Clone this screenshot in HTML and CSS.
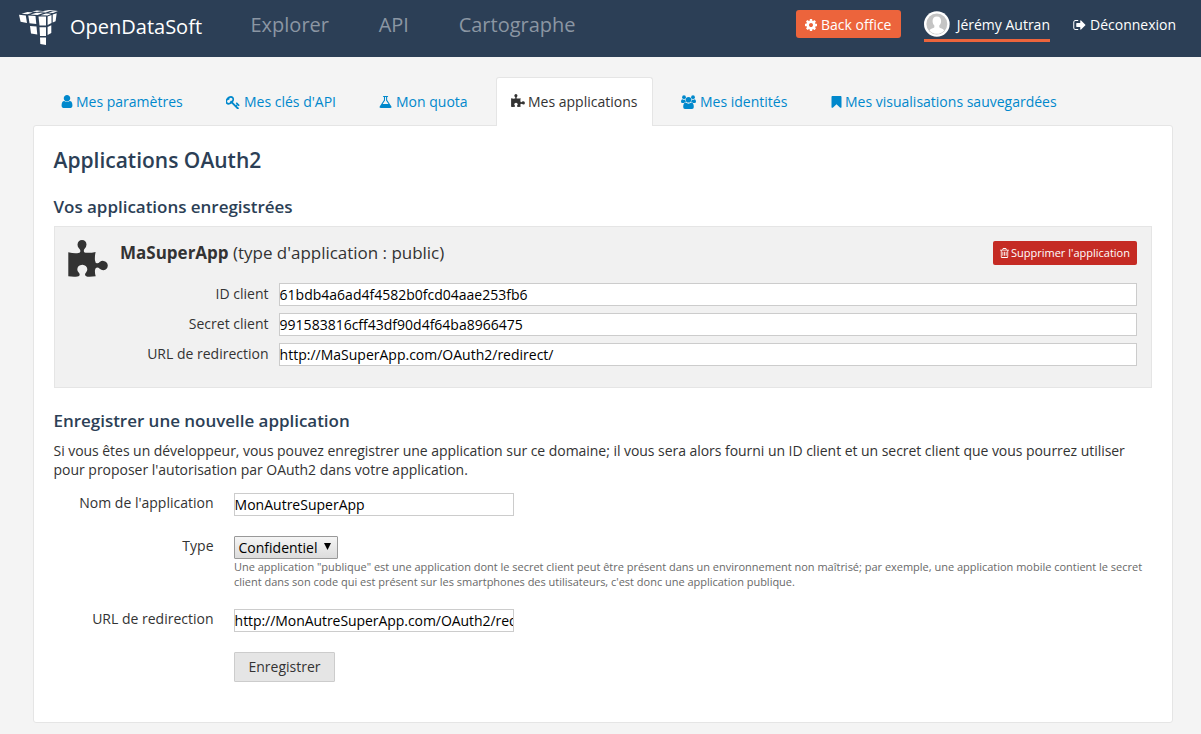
FILE: index.html
```html
<!DOCTYPE html>
<html lang="fr">
<head>
<meta charset="utf-8">
<title>OpenDataSoft - Mes applications</title>
<link rel="stylesheet" href="styles.css">
</head>
<body>
<header class="topbar">
  <a class="brand">
    <svg class="brand-logo" viewBox="0 0 40 36" fill="#fff">
      <path d="M0 4.800L6.800 5.600L8 13L1.600 11.800ZM9.300 5.500L16.500 6L17.300 14L10.500 13.200ZM19.500 6.500H27V15.500H20.500ZM11 16L17.500 16.600L18.300 24.500L12 23.600ZM20.500 17.200H27V26H21ZM21 27.500H27V35L21.300 34ZM28.600 6.500L32.500 5V13L28.600 15ZM33.700 4.500L37.700 3.200L36.600 11.300L33.700 12.600ZM28.600 17L32.300 15.200V23L28.600 25ZM2.500 3.700L8.500 2L14 2.400L8.500 4.200ZM11.500 4.400L17.500 2.700L24 3.100L18.500 5ZM21.500 5.300L27 3.400L32.500 3.700L28.500 5.600ZM13 1.600L18 .5L23.500 .9L18 2ZM20.500 2.200L26 .9L31 1.200L26.500 2.600ZM29.500 2.700L34 1.200L39 .9L34 3ZM24.500 .6L29.500 0L39 .4L30.500 .9Z"/>
    </svg>
    <span>OpenDataSoft</span>
  </a>
  <nav class="main-nav"><a>Explorer</a><a>API</a><a>Cartographe</a></nav>
  <div class="account">
    <a class="backoffice"><svg class="icon" viewBox="128 128 1536 1536"><path d="M1152 896q0-106-75-181t-181-75-181 75-75 181 75 181 181 75 181-75 75-181zm512-109v222q0 12-8 23t-20 13l-185 28q-19 54-39 91 35 50 107 138 10 12 10 25t-9 23q-27 37-99 108t-94 71q-12 0-26-9l-138-108q-44 23-91 38-16 136-29 186-7 28-36 28h-222q-14 0-24.500-8.500t-11.500-21.500l-28-184q-49-16-90-37l-141 107q-10 9-25 9-14 0-25-11-126-114-165-168-7-10-7-23 0-12 8-23 15-21 51-66.500t54-70.500q-27-50-41-99l-183-27q-13-2-21-12.500t-8-23.500v-222q0-12 8-23t19-13l186-28q14-46 39-92-40-57-107-138-10-12-10-24 0-10 9-23 26-36 98.500-107.500t94.500-71.500q13 0 26 10l138 107q44-23 91-38 16-136 29-186 7-28 36-28h222q14 0 24.500 8.500t11.500 21.500l28 184q49 16 90 37l142-107q9-9 24-9 13 0 25 10 129 119 165 170 7 8 7 22 0 12-8 23-15 21-51 66.500t-54 70.500q26 50 41 98l183 28q13 2 21 12.500t8 23.500z"/></svg><span>Back office</span></a>
    <a class="profile">
      <svg class="avatar" viewBox="0 0 26 26"><circle cx="13" cy="13" r="13" fill="#fff"/><circle cx="13" cy="13" r="10.600" fill="#c4c4c4"/><path fill="#fff" d="M13 5.500c3 0 4.300 2 4.300 4.500 0 2-.8 3.600-1.800 4.600v1.600c.8 1 4 1.200 5 3.400A10 10 0 0 1 13 23a10 10 0 0 1-7.500-3.400c1-2.200 4.200-2.400 5-3.400v-1.600c-1-1-1.800-2.600-1.800-4.600 0-2.500 1.300-4.500 4.300-4.500z"/></svg>
      <span>Jérémy Autran</span>
    </a>
    <a class="logout"><svg class="icon" viewBox="64 128 1600 1536"><path d="M704 1440q0 4 1 20t.5 26.500-3 23.500-10 19.500-20.500 6.500h-320q-119 0-203.500-84.500t-84.500-203.500v-704q0-119 84.500-203.500t203.500-84.500h320q13 0 22.500 9.500t9.500 22.500q0 4 1 20t.5 26.500-3 23.500-10 19.500-20.500 6.500h-320q-66 0-113 47t-47 113v704q0 66 47 113t113 47h312l11.500 1 11.500 3 8 5.500 7 9 2 13.500zm928-544q0 26-19 45l-544 544q-19 19-45 19t-45-19-19-45v-288h-448q-26 0-45-19t-19-45v-384q0-26 19-45t45-19h448v-288q0-26 19-45t45-19 45 19l544 544q19 19 19 45z"/></svg><span>Déconnexion</span></a>
  </div>
</header>

<nav class="tabs">
  <a class="tab tab-settings"><svg class="icon" viewBox="256 128 1280 1536"><path d="M1536 1399q0 109-62.500 187t-150.500 78h-854q-88 0-150.500-78t-62.500-187q0-85 8.500-160.500t31.500-152 58.500-131 94-89 134.500-34.500q131 128 313 128t313-128q76 0 134.500 34.500t94 89 58.500 131 31.500 152 8.500 160.500zm-256-887q0 159-112.500 271.500t-271.500 112.500-271.500-112.500-112.500-271.500 112.500-271.500 271.500-112.500 271.500 112.500 112.500 271.500z"/></svg><span>Mes paramètres</span></a>
  <a class="tab tab-keys"><svg class="icon" viewBox="64 128 1664 1536"><path d="M832 512q0-80-56-136t-136-56-136 56-56 136q0 42 19 83-41-19-83-19-80 0-136 56t-56 136 56 136 136 56 136-56 56-136q0-42-19-83 41 19 83 19 80 0 136-56t56-136zm851 704q0 17-49 66t-66 49q-9 0-28.500-16t-36.500-33-38.500-40-24.500-26l-96 96 220 220q28 28 28 68 0 42-39 81t-81 39q-40 0-68-28l-671-671q-176 131-365 131-163 0-265.500-102.500t-102.500-265.500q0-160 95-313t248-248 313-95q163 0 265.500 102.500t102.500 265.500q0 189-131 365l355 355 96-96q-3-3-26-24.500t-40-38.500-33-36.500-16-28.500q0-17 49-66t66-49q13 0 23 10 6 6 46 44.500t82 79.500 86.500 86 73 78 28.500 41z"/></svg><span>Mes clés d'API</span></a>
  <a class="tab tab-quota"><svg class="icon" viewBox="100 128 1580 1536" preserveAspectRatio="none"><path d="M1591 1448q56 89 21.500 152.500t-140.500 63.500h-1152q-106 0-140.500-63.500t21.500-152.500l503-793v-399h-64q-26 0-45-19t-19-45 19-45 45-19h512q26 0 45 19t19 45-19 45-45 19h-64v399zm-779-725l-272 429h712l-272-429-20-31v-436h-128v436z"/></svg><span>Mon quota</span></a>
  <a class="tab tab-apps active"><svg class="icon" viewBox="0 0 40 37"><use href="#puzzle"/></svg><span>Mes applications</span></a>
  <a class="tab tab-ids"><svg class="icon" viewBox="0 0 15 14"><circle cx="3" cy="2.200" r="1.900"/><circle cx="12" cy="2.200" r="1.900"/><circle cx="7.500" cy="4.800" r="2.800"/><path d="M1.300 4.200Q2.900 5.200 4.200 4.600Q4.100 6 5 7.100Q3.700 7.100 2.900 8H1.500Q0 8 0 6.700Q0 4.500 1.300 4.200ZM13.700 4.200Q12.100 5.200 10.800 4.600Q10.900 6 10 7.100Q11.300 7.100 12.100 8H13.500Q15 8 15 6.700Q15 4.500 13.700 4.200ZM4.700 7.600Q7.500 9.700 10.300 7.600Q12.800 7.700 12.800 12Q12.800 14 11 14H4Q2.200 14 2.200 12Q2.200 7.700 4.700 7.600Z"/></svg><span>Mes identités</span></a>
  <a class="tab tab-saved"><svg class="icon" viewBox="256 128 1280 1536"><path d="M1420 128q23 0 44 9 33 13 52.500 41t19.500 62v1289q0 34-19.500 62t-52.500 41q-19 8-44 8-48 0-83-32l-441-424-441 424q-36 33-83 33-23 0-44-9-33-13-52.500-41t-19.500-62v-1289q0-34 19.500-62t52.500-41q21-9 44-9h1048z"/></svg><span>Mes visualisations sauvegardées</span></a>
</nav>

<main class="panel">
  <h1>Applications OAuth2</h1>
  <h2>Vos applications enregistrées</h2>
  <section class="app">
    <svg class="app-icon" viewBox="0 0 40 37"><path id="puzzle" d="M.3 12.300Q6 13.600 10.500 13Q12.800 12.600 12.300 10.600Q12 9.300 10.700 8Q9.500 6.500 9.500 4.500Q10 .1 14 0Q18.200 .2 18.500 4.500Q18.400 6.700 17 8.200Q15.800 9.500 15.800 10.700Q15.600 12.500 17.500 12.700Q22 13.200 27.600 12Q26.600 16.500 27 20.500Q27.300 23.300 29.200 23.300Q30.500 23.200 32 21.700Q33.500 20.700 35.500 20.900Q39.500 21.400 39.800 25.500Q39.500 29.800 35.500 30.200Q33.300 30.300 31.700 28.800Q30.500 27.600 29 27.500Q27.300 27.600 27 30Q26.700 33 27.700 36.300Q23.500 36.900 19.500 36.700Q17 36.300 17 34.600Q17 33.500 18.200 32.200Q19.400 30.800 19.300 29Q18.700 25 14.400 24.700Q9.500 25 9.300 29.200Q9.300 31 10.500 32.300Q11.700 33.500 11.700 34.700Q11.600 36.300 9.500 36.600Q5 37.100 .3 36.300Z"/></svg>
    <div class="app-head">
      <h3><strong>MaSuperApp</strong> <span>(type d'application : public)</span></h3>
      <button class="delete"><svg class="icon" viewBox="192 128 1408 1536"><path d="M704 736v576q0 14-9 23t-23 9h-64q-14 0-23-9t-9-23v-576q0-14 9-23t23-9h64q14 0 23 9t9 23zm256 0v576q0 14-9 23t-23 9h-64q-14 0-23-9t-9-23v-576q0-14 9-23t23-9h64q14 0 23 9t9 23zm256 0v576q0 14-9 23t-23 9h-64q-14 0-23-9t-9-23v-576q0-14 9-23t23-9h64q14 0 23 9t9 23zm128 724v-948h-896v948q0 22 7 40.500t14.500 27 10.500 8.500h832q3 0 10.500-8.500t14.500-27 7-40.500zm-672-1076h448l-48-117q-7-9-17-11h-317q-10 2-17 11zm928 32v64q0 14-9 23t-23 9h-96v948q0 83-47 143.500t-113 60.500h-832q-66 0-113-58.500t-47-141.500v-952h-96q-14 0-23-9t-9-23v-64q0-14 9-23t23-9h309l70-167q15-37 54-63t79-26h320q40 0 79 26t54 63l70 167h309q14 0 23 9t9 23z"/></svg><span>Supprimer l'application</span></button>
    </div>
    <div class="app-fields">
      <label for="cid">ID client</label><input id="cid" type="text" value="61bdb4a6ad4f4582b0fcd04aae253fb6">
      <label for="sec">Secret client</label><input id="sec" type="text" value="991583816cff43df90d4f64ba8966475">
      <label for="url">URL de redirection</label><input id="url" type="text" value="http://MaSuperApp.com/OAuth2/redirect/">
    </div>
  </section>

  <h2 class="new-title">Enregistrer une nouvelle application</h2>
  <p class="intro">Si vous êtes un développeur, vous pouvez enregistrer une application sur ce domaine; il vous sera alors fourni un ID client et un secret client que vous pourrez utiliser<br><span>pour proposer l'autorisation par OAuth2 dans votre application.</span></p>
  <form class="new-form">
    <label for="name">Nom de l'application</label>
    <div><input id="name" type="text" value="MonAutreSuperApp"></div>
    <label for="type">Type</label>
    <div>
      <div class="select" id="type"><span>Confidentiel</span><svg viewBox="0 0 7 7"><path d="M0 0H7L3.500 7Z"/></svg></div>
      <p class="help">Une application "publique" est une application dont le secret client peut être présent dans un environnement non maîtrisé; par exemple, une application mobile contient le secret<br>client dans son code qui est présent sur les smartphones des utilisateurs, c'est donc une application publique.</p>
    </div>
    <label for="redir">URL de redirection</label>
    <div><input id="redir" type="text" value="http://MonAutreSuperApp.com/OAuth2/redirect/"></div>
    <span></span>
    <div><button type="button" class="save">Enregistrer</button></div>
  </form>
</main>
</body>
</html>
```
FILE: styles.css
```css
* { box-sizing: border-box; }
body {
  margin: 0;
  height: 734px;
  overflow: hidden;
  background: #f4f4f4;
  color: #333;
  font: 14px/19px "Open Sans", "Noto Sans", sans-serif;
}
h1, h2, h3, p { margin: 0; }
span, a, label, p, h1, h2 { white-space: nowrap; }
input, button { font-family: inherit; }
.icon { fill: currentColor; flex: none; width: 12px; height: 12px; }

.topbar {
  display: flex;
  height: 57px;
  background: #2c3f56;
  color: #fff;
}
.brand {
  display: flex;
  width: 250.5px;
  padding: 10px 0 0 19px;
  font-size: 20px;
  line-height: 34px;
}
.brand-logo { width: 40px; height: 36px; margin-right: 11px; }
.main-nav {
  display: flex;
  gap: 49.7px;
  padding-top: 10px;
  color: #8b96a3;
  font-size: 20px;
  line-height: 30px;
}
.account { display: flex; margin-left: auto; padding: 10px 25px 0 0; }
.backoffice {
  display: flex;
  align-items: center;
  gap: 4px;
  width: 105px;
  height: 28px;
  padding-left: 9px;
  border-radius: 3px;
  background: #ec643c;
}
.backoffice .icon { margin-top: 2px; }
.profile {
  display: flex;
  gap: 7px;
  width: 126px;
  height: 31px;
  margin: 1px 0 0 23px;
  border-bottom: 3px solid #ec643c;
  line-height: 27px;
}
.avatar { width: 26px; height: 26px; }
.logout { display: flex; align-items: center; gap: 4px; width: 103px; height: 28px; margin-left: 23px; }
.logout .icon { width: 13px; margin-top: 2px; }

.tabs { display: flex; gap: 13px; height: 69px; padding: 20px 0 0 46px; }
.tab {
  display: flex;
  align-items: center;
  gap: 4px;
  height: 49px;
  padding: 0 14px 2px;
  border: 1px solid transparent;
  border-bottom: 0;
  border-radius: 3px 3px 0 0;
  color: #0088cc;
}
.tab .icon { margin-top: 2px; }
.tab-settings { width: 152px; }
.tab-settings .icon { width: 12px; height: 13px; margin-top: 1px; }
.tab-settings, .tab-saved { gap: 3px; }
.tab-keys { width: 140px; }
.tab-keys .icon { width: 14px; height: 13px; }
.tab-quota { width: 119px; }
.tab-quota .icon { width: 13px; }
.tab-apps { width: 157px; gap: 3px; }
.tab-apps .icon { width: 14px; height: 13px; margin-top: -1px; }
.tab-ids { width: 137px; }
.tab-ids .icon { width: 15px; height: 14px; margin-top: 1px; }
.tab-saved .icon { width: 11px; height: 12px; }
.tab.active { position: relative; background: #fff; border-color: #e5e5e5; color: #333; }

.panel {
  width: 1140px;
  height: 598px;
  margin: -1px 0 0 33px;
  padding: 22px 20px 0 19.5px;
  border: 1px solid #e5e5e5;
  border-radius: 3px;
  background: #fff;
}
h1 { color: #2c3f56; font-size: 21px; font-weight: 600; line-height: 25px; }
h2 { margin-top: 22px; color: #2c3f56; font-size: 17px; font-weight: 600; line-height: 24px; letter-spacing: -0.03px; }
.app {
  display: grid;
  grid-template-columns: 40px 1fr;
  column-gap: 12px;
  width: 1098px;
  height: 162px;
  margin: 7px 0 0 .5px;
  padding: 13px 14px 0 13px;
  border: 1px solid #e5e5e5;
  background: #f1f1f1;
  align-content: start;
}
.app-icon { width: 40px; height: 37px; fill: #333; }
.app-head { display: flex; justify-content: space-between; align-items: flex-start; padding-top: 1px; }
h3 { font-size: 17px; font-weight: 400; line-height: 24px; }
h3 strong { font-weight: 700; }
h3 span { letter-spacing: -0.02px; }
.delete {
  display: flex;
  align-items: center;
  gap: 2px;
  width: 144px;
  height: 24px;
  padding: 0 0 1px 7px;
  border: 0;
  border-radius: 2px;
  background: #c52b24;
  color: #fff;
  font-size: 11px;
}
.delete .icon { width: 9px; height: 10px; margin-top: 1px; }
.app-fields {
  grid-column: 1 / -1;
  display: grid;
  grid-template-columns: 200.5px 858px;
  gap: 7px 10.5px;
  margin-top: 6px;
}
.app-fields label { line-height: 22px; text-align: right; }
input {
  height: 23px;
  padding: 0;
  border: 1px solid #ccc;
  background: #fff;
  color: #000;
  font-size: 14px;
  text-indent: -.4px;
}
.new-title { margin-top: 21px; }
.intro { margin-top: 8px; letter-spacing: -0.044px; }
.intro span { letter-spacing: -0.02px; }
.new-form { display: grid; grid-template-columns: 160px 918px; column-gap: 20.5px; margin-top: 14px; }
.new-form label { line-height: 19px; text-align: right; }
.new-form > div:nth-of-type(1) { height: 43px; }
.new-form > div:nth-of-type(2) { height: 73px; }
.new-form > div:nth-of-type(3) { height: 43px; }
.new-form input { display: block; width: 280px; }
#redir { letter-spacing: -0.06px; }
.select {
  display: flex;
  align-items: center;
  width: 104px;
  height: 23px;
  padding-left: 3.5px;
  border: 1px solid #999;
  border-radius: 1px;
  background: linear-gradient(#f5f5f5, #dcdcdc);
  color: #000;
}
.select svg { width: 7px; height: 7px; margin: -2px 0 0 6.500px; }
.help { color: #696969; font-size: 11px; line-height: 15px; letter-spacing: -0.014px; }
.save {
  width: 101px;
  height: 30px;
  padding: 0 0 1px;
  border: 1px solid #ccc;
  border-radius: 1px;
  background: #e5e5e5;
  color: #333;
  font-size: 14px;
}
```
